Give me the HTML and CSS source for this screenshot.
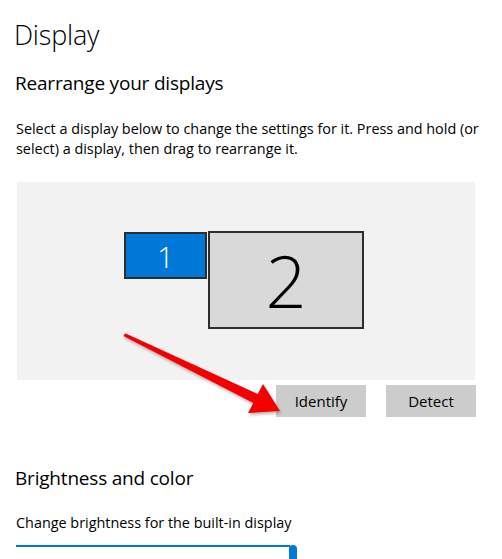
FILE: index.html
```html
<!DOCTYPE html>
<html>
<head>
<meta charset="utf-8">
<link rel="stylesheet" href="styles.css">
</head>
<body>
<main class="page">
  <h1 class="title">Display</h1>
  <h2 class="section">Rearrange your displays</h2>
  <p class="desc">Select a display below to change the settings for it. Press and hold (or select) a display, then drag to rearrange it.</p>
  <div class="arrange">
    <div class="monitors">
      <div class="mon mon-1">1</div>
      <div class="mon mon-2">2</div>
    </div>
  </div>
  <div class="actions">
    <button class="btn">Identify</button>
    <button class="btn">Detect</button>
  </div>
  <h2 class="section section-b">Brightness and color</h2>
  <p class="label">Change brightness for the built-in display</p>
  <div class="slider">
    <div class="track"></div>
    <div class="thumb"></div>
  </div>
  <svg class="arrow" width="502" height="559" viewBox="0 0 502 559" aria-hidden="true">
    <defs>
      <filter id="sh" x="-10%" y="-10%" width="130%" height="130%">
        <feDropShadow dx="1" dy="2" stdDeviation="1.5" flood-color="#000" flood-opacity="0.3"/>
      </filter>
    </defs>
    <path filter="url(#sh)" fill="#f40000" d="M125.7 333.4 L257.7 394 L263 384 L280 411 L248 413 L253.3 403 L124.3 336.6 Q122.6 335 125.7 333.4 Z"/>
  </svg>
</main>
</body>
</html>
```
FILE: styles.css
```css
html, body {
  margin: 0;
  padding: 0;
  background: #ffffff;
}
body {
  width: 502px;
  height: 559px;
  overflow: hidden;
  font-family: "Open Sans", "Noto Sans", "Liberation Sans", sans-serif;
  color: #000;
}
.page {
  position: relative;
  padding: 0 0 0 15px;
}
.title {
  margin: 0;
  padding-top: 17px;
  margin-left: -1px;
  font-size: 27px;
  font-weight: 300;
  line-height: 36px;
  letter-spacing: -0.2px;
}
.section {
  margin: 0;
  padding-top: 17px;
  font-size: 19px;
  font-weight: 400;
  line-height: 26px;
  letter-spacing: -0.2px;
}
.desc {
  margin: 0;
  padding-top: 23px;
  padding-left: 1px;
  width: 475px;
  font-size: 14.4px;
  line-height: 20px;
}
.arrange {
  margin: 23px 0 0 2px;
  width: 458px;
  height: 198px;
  background: #f2f2f2;
  box-sizing: border-box;
  padding: 49px 0 0 107px;
}
.monitors {
  display: flex;
  align-items: flex-start;
  gap: 1px;
}
.mon {
  box-sizing: border-box;
  border: 2px solid #2d2d2d;
  display: flex;
  align-items: center;
  justify-content: center;
  font-weight: 300;
}
.mon-1 {
  margin-top: 1px;
  width: 83px;
  height: 47px;
  background: #0078d7;
  color: #fff;
  font-size: 30px;
  padding-top: 2px;
}
.mon-2 {
  width: 156px;
  height: 98px;
  background: #d9d9d9;
  color: #000;
  font-size: 72px;
}
.actions {
  display: flex;
  gap: 20px;
  margin-top: 5px;
  padding-left: 261px;
}
.btn {
  width: 90px;
  height: 32px;
  border: 0;
  background: #cccccc;
  font-family: inherit;
  font-size: 15px;
  color: #000;
  padding: 0;
}
.section-b {
  padding-top: 48px;
}
.label {
  margin: 0;
  padding-top: 22px;
  padding-left: 1px;
  font-size: 14.4px;
  line-height: 20px;
}
.slider {
  position: relative;
  margin-top: 3px;
  margin-left: 1px;
  width: 281px;
  height: 24px;
}
.track {
  margin-top: 12px;
  width: 274px;
  height: 2px;
  background: #0078d7;
}
.thumb {
  position: absolute;
  left: 273px;
  top: 0;
  width: 8px;
  height: 24px;
  border-radius: 4px;
  background: #0078d7;
}
.arrow {
  position: absolute;
  left: 0;
  top: 0;
  pointer-events: none;
}
```
